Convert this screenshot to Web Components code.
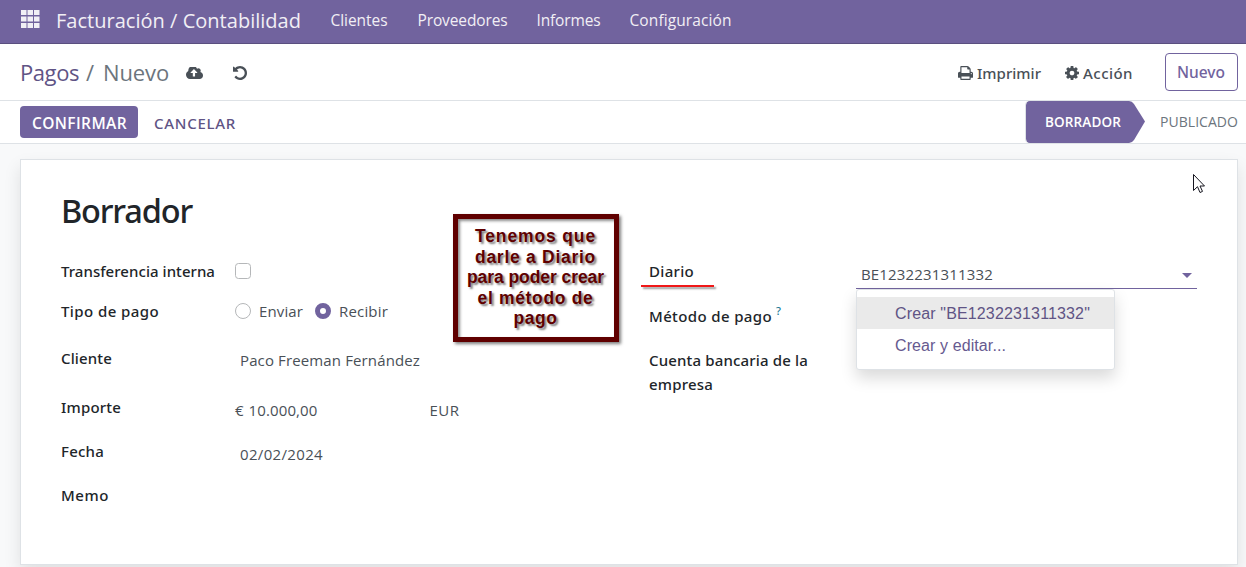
<!DOCTYPE html>
<html lang="es">
<head>
<meta charset="utf-8">
<title>Pagos</title>
<style>
html,body{margin:0;height:567px;overflow:hidden}
body{--medium:"Noto Sans","Open Sans",sans-serif;font-family:"Open Sans","Noto Sans",sans-serif;background:#f8f9fa;color:#212529}
</style>
</head>
<body>
<payment-page></payment-page>
<script>
const define = (name, html) => {
  const tpl = document.createElement('template');
  tpl.innerHTML = html;
  customElements.define(name, class extends HTMLElement {
    constructor() {
      super();
      this.attachShadow({mode: 'open'}).appendChild(tpl.content.cloneNode(true));
    }
  });
};

define('nav-bar', `<style>
:host{display:flex;box-sizing:border-box;height:44px;background:#71639e;border-bottom:1px solid #5a4f7f;color:#f1eff5;padding-left:21px;align-items:flex-start}
svg{display:block;margin-top:10px;width:19px;height:18px;fill:#f1eff5}
ui-text{line-height:24px;font-size:15.500px;margin-top:8px;margin-left:29px}
.brand{font-size:20px;line-height:28px;margin-top:7px;margin-left:16px}
</style>
<svg viewBox="0 0 19 18"><path d="M0 0h5.500v5H0zM6.500 0h5.500v5H6.500zM13 0h5.500v5H13zM0 6.500h5.500v5H0zM6.500 6.500h5.500v5H6.500zM13 6.500h5.500v5H13zM0 13h5.500v5H0zM6.500 13h5.500v5H6.500zM13 13h5.500v5H13z"/></svg>
<ui-text class="brand" w="245">Facturación / Contabilidad</ui-text>
<ui-text w="57" style="margin-left:29.500px">Clientes</ui-text><ui-text w="90" style="margin-left:30px">Proveedores</ui-text><ui-text w="64">Informes</ui-text><ui-text w="102">Configuración</ui-text>`);

define('control-panel', `<style>
:host{display:flex;box-sizing:border-box;height:57px;background:#fff;border-bottom:1px solid #dee2e6;padding:0 8px 0 20px;align-items:flex-start;color:#495057}
svg{display:block;fill:#495057;flex:none}
.crumb{font-size:22px;line-height:30px;margin-top:13px;white-space:pre}
.a{font-family:var(--medium);font-size:15px;font-weight:500;line-height:24px;margin-top:17px}
.sp{flex:1}
button{all:unset;box-sizing:border-box;width:73px;height:38px;margin:9px 0 0 32px;border:1px solid #71639e;border-radius:4px;color:#71639e;font-family:var(--medium);font-weight:500;font-size:15.500px;line-height:24px}
button ui-text{margin:-1px 0 0 11px}
</style>
<ui-text class="crumb" w="59" style="color:#5f5485">Pagos</ui-text><ui-text class="crumb" w="10" style="color:#6c757d;margin-left:7px">/</ui-text><ui-text class="crumb" w="66" style="color:#6c757d;margin-left:7px">Nuevo</ui-text>
<svg style="margin:23px 0 0 17px" width="17" height="12" viewBox="-64 256 1920 1280" preserveAspectRatio="none"><path d="M1216 864q0-14-9-23l-352-352q-9-9-23-9t-23 9l-351 351q-10 12-10 24 0 14 9 23t23 9h224v352q0 13 9.500 22.500t22.500 9.500h192q13 0 22.500-9.500t9.500-22.500v-352h224q13 0 22.500-9.500t9.500-22.500zm640 288q0 159-112.500 271.500t-271.500 112.500h-1088q-185 0-316.500-131.500t-131.500-316.500q0-130 70-240t188-165q-2-30-2-43 0-212 150-362t362-150q156 0 285.500 87t188.500 231q71-62 166-62 106 0 181 75t75 181q0 76-41 138 130 31 213.500 135.500t83.500 238.500z"/></svg>
<svg style="margin:22px 0 0 30px" width="14" height="14" viewBox="0 -128 1536 1536"><path d="M1536 640q0 156-61 298t-164 245-245 164-298 61q-172 0-327-72.500t-264-204.500q-7-10-6.500-22.500t8.500-20.500l137-138q10-9 25-9 16 2 23 12 73 95 179 147t225 52q104 0 198.500-40.500t163.500-109.500 109.500-163.500 40.500-198.500-40.500-198.500-109.500-163.500-163.500-109.500-198.500-40.500q-98 0-188 35.500t-160 101.500l137 138q31 30 14 69-17 40-59 40h-448q-26 0-45-19t-19-45v-448q0-42 40-59 39-17 69 14l130 129q107-101 244.500-156.500t284.500-55.500q156 0 298 61t245 164 164 245 61 298z"/></svg>
<span class="sp"></span>
<svg style="margin:22px 4px 0 0" width="15" height="14" viewBox="64 128 1664 1536" preserveAspectRatio="none"><path d="M448 1536h896v-256h-896v256zm0-640h896v-384h-160q-40 0-68-28t-28-68v-160h-640v640zm1152 64q0-26-19-45t-45-19-45 19-19 45 19 45 45 19 45-19 19-45zm128 0v416q0 13-9.500 22.500t-22.500 9.500h-224v160q0 40-28 68t-68 28h-960q-40 0-68-28t-28-68v-160h-224q-13 0-22.500-9.500t-9.500-22.500v-416q0-79 56.500-135.500t135.500-56.500h64v-544q0-40 28-68t68-28h672q40 0 88 20t76 48l152 152q28 28 48 76t20 88v256h64q79 0 135.500 56.500t56.500 135.500z"/></svg>
<ui-text class="a" w="64">Imprimir</ui-text>
<svg style="margin:22px 4px 0 24px" width="14" height="14" viewBox="128 128 1536 1536"><path d="M1152 896q0-106-75-181t-181-75-181 75-75 181 75 181 181 75 181-75 75-181zm512-109v222q0 12-8 23t-20 13l-185 28q-19 54-39 91 35 50 107 138 10 12 10 25t-9 23q-27 37-99 108t-94 71q-12 0-26-9l-138-108q-44 23-91 38-16 136-29 186-7 28-36 28h-222q-14 0-24.500-8.500t-11.500-21.500l-28-184q-49-16-90-37l-141 107q-10 9-25 9-14 0-25-11-126-114-165-168-7-10-7-23 0-12 8-23 15-21 51-66.500t54-70.500q-27-50-41-99l-183-27q-13-2-21-12.500t-8-23.500v-222q0-12 8-23t19-13l186-28q14-46 39-92-40-57-107-138-10-12-10-24 0-10 9-23 26-36 98.500-107.500t94.500-71.500q13 0 26 10l138 107q44-23 91-38 16-136 29-186 7-28 36-28h222q14 0 24.500 8.500t11.500 21.500l28 184q49 16 90 37l142-107q9-9 24-9 13 0 25 10 129 119 165 170 7 8 7 22 0 12-8 23-15 21-51 66.500t-54 70.500q26 50 41 98l183 28q13 2 21 12.500t8 23.500z"/></svg>
<ui-text class="a" w="50">Acción</ui-text>
<button><ui-text w="48">Nuevo</ui-text></button>`);

define('status-bar', `<style>
:host{display:flex;box-sizing:border-box;height:43px;background:#fff;border-bottom:1px solid #dee2e6;padding:0 8px 0 20px;font-size:15.500px;font-weight:500;align-items:flex-start}
.ok{box-sizing:border-box;width:118px;height:32px;margin-top:5px;background:#71639e;border-radius:4px;color:#fff;line-height:24px;padding:5px 0 0 12px;font-weight:600}
.no{font-family:var(--medium);font-size:15px;color:#5f5485;line-height:24px;margin:10px 0 0 16px}
.sp{flex:1}
.step{position:relative;box-sizing:border-box;width:120px;height:42px;color:#fff;font-size:13.500px;font-weight:600;line-height:24px;padding:9px 0 0 20px}
.step svg{position:absolute;left:0;top:0;z-index:-1}
.step{isolation:isolate}
.next{font-size:14px;font-weight:400;line-height:24px;color:#6c757d;margin:9px 0 0 15px}
</style>
<div class="ok"><ui-text w="95">CONFIRMAR</ui-text></div><ui-text class="no" w="82">CANCELAR</ui-text><span class="sp"></span>
<div class="step"><svg width="120" height="42"><path fill="#71639e" d="M5 0H104Q107 0 109 3L120 20.500L109 39Q107 42 104 42H5Q1 42 1 38V4Q1 0 5 0z"/><path fill="none" stroke="#dee2e6" d="M3 0Q.5 1 .5 4V38Q.5 41 3 42"/></svg><ui-text w="76">BORRADOR</ui-text></div><ui-text class="next" w="78">PUBLICADO</ui-text>`);

/* label + value row; --h is the row height, --v the value's drop below the label line */
define('form-field', `<style>
:host{display:flex;height:var(--h);align-items:flex-start}
.l{width:var(--lw,174px);flex:none;font-family:var(--medium);font-weight:500;font-size:15px;line-height:24px;color:#212529}
.v{display:flex;align-items:flex-start;margin-top:var(--v,0px);font-size:15px;line-height:24px;color:#495057}
</style><div class="l"><slot name="label"></slot></div><div class="v"><slot></slot></div>`);

define('select-menu', `<style>
:host{display:block;position:relative;width:341px;height:30px;border-bottom:1px solid #71639e;box-sizing:border-box}
.in{display:flex;justify-content:space-between;padding:3px 5px 0 5px}
svg{display:block;margin-top:10.500px}
.menu{position:absolute;left:0;top:30px;box-sizing:border-box;width:259px;height:81px;border:1px solid #dee2e6;border-radius:3px;background:#fff;padding-top:7px;box-shadow:0 8px 16px rgba(0,0,0,.15);font:16px "Liberation Sans",Arial,sans-serif;color:#66598f}
.menu div{height:32px;line-height:34px;padding-left:38px}
.menu .on{background:#eaeaea;color:#5f5485}
</style>
<div class="in"><ui-text w="132">BE1232231311332</ui-text><svg width="10" height="5"><path fill="#71639e" d="M0 0h10L5 5z"/></svg></div>
<div class="menu"><div class="on"><ui-text w="195">Crear "BE1232231311332"</ui-text></div><div><ui-text w="111">Crear y editar...</ui-text></div></div>`);

define('note-box', `<style>
:host{display:block;box-sizing:border-box;width:166px;height:128px;border:5px solid #600000;background:#fff;padding-top:7px;box-shadow:2px 2px 3px rgba(0,0,0,.5),inset 2px 2px 3px rgba(0,0,0,.45);font:bold 17.500px/20.500px "Liberation Sans",Arial,sans-serif;color:#600000;text-shadow:2px 2px 2px rgba(0,0,0,.5)}
ui-text{margin:0 auto;position:relative;left:-.5px}
</style>
<ui-text w="121">Tenemos que</ui-text><ui-text w="121">darle a Diario</ui-text><ui-text w="137">para poder crear</ui-text><ui-text w="116">el método de</ui-text><ui-text w="44">pago</ui-text>`);

define('form-sheet', `<style>
:host{display:block;position:relative;box-sizing:border-box;width:1218px;height:406px;margin:15px 0 0 20px;background:#fff;border:1px solid #dee2e6;box-shadow:0 8px 16px rgba(0,0,0,.1);padding:29px 40px 0}
h1{margin:0;font-family:var(--medium);font-weight:500;font-size:32.500px;line-height:44px;height:70px}
.cols{display:grid;grid-template-columns:588px 1fr}
i{display:block;box-sizing:border-box;width:16px;height:16px;border:1px solid #b5b7b9;margin-top:3.500px;margin-right:8px}
.box{border-radius:3.500px}.r{border-radius:50%}
.on{border:5px solid #71639e;margin-left:12px}
note-box{position:absolute;left:432px;top:54px}
.line{position:absolute;left:620px;top:125px;width:73px;height:1.500px;background:#f01818;box-shadow:2px 2px 2px rgba(0,0,0,.4)}
.cur{position:absolute;left:1172px;top:14px}
sup{font-size:11px;line-height:12px;color:#1a7a96;font-weight:500;margin-left:4px;margin-top:1px;display:block}
.row{display:flex}
</style>
<h1><ui-text w="131">Borrador</ui-text></h1>
<div class="cols"><div>
<form-field style="--h:40px"><ui-text slot="label" w="154">Transferencia interna</ui-text><i class="box"></i></form-field>
<form-field style="--h:47px"><ui-text slot="label" w="98">Tipo de pago</ui-text><i class="r"></i><ui-text w="44">Enviar</ui-text><i class="r on"></i><ui-text w="49">Recibir</ui-text></form-field>
<form-field style="--h:49px;--v:2px"><ui-text slot="label" w="51">Cliente</ui-text><ui-text w="180" style="margin-left:5px">Paco Freeman Fernández</ui-text></form-field>
<form-field style="--h:44px;--v:3px"><ui-text slot="label" w="60">Importe</ui-text><ui-text w="8.500">€</ui-text><ui-text w="69" style="margin-left:5px">10.000,00</ui-text><ui-text w="30" style="margin-left:112px">EUR</ui-text></form-field>
<form-field style="--h:44px;--v:3px"><ui-text slot="label" w="43">Fecha</ui-text><ui-text w="83" style="margin-left:5px">02/02/2024</ui-text></form-field>
<form-field style="--h:24px"><ui-text slot="label" w="48">Memo</ui-text></form-field>
</div><div style="--lw:207px">
<form-field style="--h:45px"><ui-text slot="label" w="45">Diario</ui-text><select-menu></select-menu></form-field>
<form-field style="--h:44px"><div slot="label" class="row"><ui-text w="123">Método de pago</ui-text><sup>?</sup></div></form-field>
<form-field style="--h:48px"><div slot="label"><ui-text w="159">Cuenta bancaria de la</ui-text><ui-text w="64">empresa</ui-text></div></form-field>
</div></div>
<note-box></note-box><div class="line"></div>
<svg class="cur" width="13" height="20"><path d="M.5.5V16.500L4.500 12.700L7 18.500L9.500 17.400L7 12H11.500z" fill="#fff" stroke="#15151f"/></svg>`);

define('payment-page', `<style>:host{display:flex;flex-direction:column;height:567px}</style>
<nav-bar></nav-bar><control-panel></control-panel><status-bar></status-bar><form-sheet></form-sheet>`);

/* one line of text whose tracking is tuned so that it takes up w pixels */
customElements.define('ui-text', class extends HTMLElement {
  connectedCallback() {
    if (this.shadowRoot) return;
    this.attachShadow({mode: 'open'}).innerHTML = '<style>:host{display:block;white-space:nowrap;flex:none}</style><span><slot></slot></span>';
    const w = +this.getAttribute('w');
    const span = this.shadowRoot.querySelector('span');
    const n = this.textContent.length;
    span.style.letterSpacing = (w - span.getBoundingClientRect().width) / n + 'px';
    this.style.width = w + 'px';
  }
});
</script>
</body>
</html>
